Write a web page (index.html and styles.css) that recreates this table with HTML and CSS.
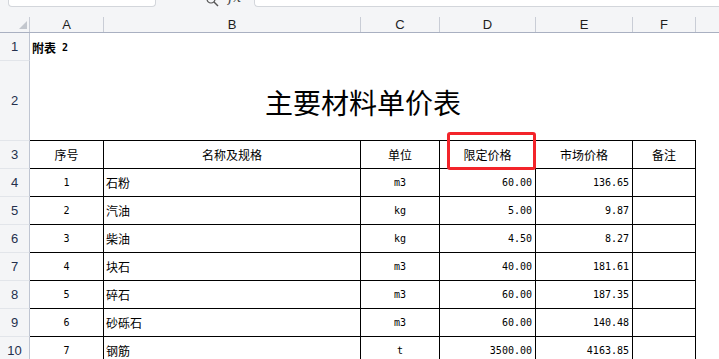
FILE: index.html
```html
<!DOCTYPE html>
<html>
<head>
<meta charset="utf-8">
<link rel="stylesheet" href="styles.css">
</head>
<body>
<div class="toolbar">
  <div class="namebox"><span class="nametext">A11</span></div>
  <div class="fxicon">
    <svg width="40" height="8" viewBox="0 0 40 8">
      <circle cx="5" cy="-1" r="4" fill="none" stroke="#555" stroke-width="1.2"/>
      <line x1="8" y1="2" x2="12" y2="6" stroke="#555" stroke-width="1.4"/>
    </svg>
    <span class="fxtext">fx</span>
  </div>
  <div class="formula"></div>
</div>

<div class="sheet">
  <div class="grid colhead">
    <div class="hc corner"><svg width="8" height="8" viewBox="0 0 8 8"><polygon points="8,0 8,8 0,8" fill="#c3c7ce"/></svg></div>
    <div class="hc">A</div>
    <div class="hc">B</div>
    <div class="hc">C</div>
    <div class="hc">D</div>
    <div class="hc">E</div>
    <div class="hc">F</div>
    <div class="hc last"></div>
  </div>

  <div class="grid row r1">
    <div class="rh">1</div>
    <div class="cell note"><b class="cjk">附表</b><b class="mono"> 2</b></div>
  </div>

  <div class="grid row r2">
    <div class="rh">2</div>
    <div class="cell title">主要材料单价表</div>
  </div>

  <div class="grid row">
    <div class="rh">3</div>
    <div class="cell t c cjk">序号</div>
    <div class="cell t c cjk">名称及规格</div>
    <div class="cell t c cjk">单位</div>
    <div class="cell t c cjk">限定价格</div>
    <div class="cell t c cjk">市场价格</div>
    <div class="cell t c cjk">备注</div>
  </div>

  <div class="grid row">
    <div class="rh">4</div>
    <div class="cell t c mono">1</div>
    <div class="cell t l cjk">石粉</div>
    <div class="cell t c mono">m3</div>
    <div class="cell t r mono">60.00</div>
    <div class="cell t r mono">136.65</div>
    <div class="cell t"></div>
  </div>

  <div class="grid row">
    <div class="rh">5</div>
    <div class="cell t c mono">2</div>
    <div class="cell t l cjk">汽油</div>
    <div class="cell t c mono">kg</div>
    <div class="cell t r mono">5.00</div>
    <div class="cell t r mono">9.87</div>
    <div class="cell t"></div>
  </div>

  <div class="grid row">
    <div class="rh">6</div>
    <div class="cell t c mono">3</div>
    <div class="cell t l cjk">柴油</div>
    <div class="cell t c mono">kg</div>
    <div class="cell t r mono">4.50</div>
    <div class="cell t r mono">8.27</div>
    <div class="cell t"></div>
  </div>

  <div class="grid row">
    <div class="rh">7</div>
    <div class="cell t c mono">4</div>
    <div class="cell t l cjk">块石</div>
    <div class="cell t c mono">m3</div>
    <div class="cell t r mono">40.00</div>
    <div class="cell t r mono">181.61</div>
    <div class="cell t"></div>
  </div>

  <div class="grid row">
    <div class="rh">8</div>
    <div class="cell t c mono">5</div>
    <div class="cell t l cjk">碎石</div>
    <div class="cell t c mono">m3</div>
    <div class="cell t r mono">60.00</div>
    <div class="cell t r mono">187.35</div>
    <div class="cell t"></div>
  </div>

  <div class="grid row">
    <div class="rh">9</div>
    <div class="cell t c mono">6</div>
    <div class="cell t l cjk">砂砾石</div>
    <div class="cell t c mono">m3</div>
    <div class="cell t r mono">60.00</div>
    <div class="cell t r mono">140.48</div>
    <div class="cell t"></div>
  </div>

  <div class="grid row">
    <div class="rh">10</div>
    <div class="cell t c mono">7</div>
    <div class="cell t l cjk">钢筋</div>
    <div class="cell t c mono">t</div>
    <div class="cell t r mono">3500.00</div>
    <div class="cell t r mono">4163.85</div>
    <div class="cell t"></div>
  </div>

  <div class="highlight"></div>
</div>
</body>
</html>
```

FILE: styles.css
```css
html, body {
  margin: 0;
  padding: 0;
  background: #ffffff;
  width: 719px;
  height: 359px;
  overflow: hidden;
}

body {
  font-family: "Liberation Sans", Arial, sans-serif;
  color: #000;
}

.toolbar {
  height: 8px;
  background: #f4f5f7;
  display: flex;
  align-items: flex-start;
}

.namebox {
  margin-left: 8px;
  width: 148px;
  height: 7px;
  box-sizing: border-box;
  background: #fff;
  border: 1px solid #d3d6db;
  border-top: none;
  border-radius: 0 0 4px 4px;
  overflow: hidden;
  display: flex;
  justify-content: center;
}

.nametext {
  font-size: 13px;
  line-height: 14px;
  margin-top: -11px;
  margin-right: 12px;
  color: #333;
}

.fxicon {
  margin-left: 50px;
  width: 48px;
  height: 8px;
  overflow: hidden;
  display: flex;
  align-items: flex-start;
}

.fxtext {
  font-family: "DejaVu Serif", serif;
  font-style: italic;
  font-size: 14px;
  line-height: 14px;
  margin-top: -10px;
  margin-left: -18px;
  color: #444;
}

.formula {
  flex: 1;
  height: 7px;
  box-sizing: border-box;
  background: #fff;
  border-left: 1px solid #d3d6db;
  border-bottom: 1px solid #d3d6db;
  border-radius: 0 0 0 4px;
}

.sheet {
  position: relative;
}

.grid {
  display: grid;
  grid-template-columns: 30px 74px 257px 79px 96px 97px 63px 1fr;
}

.colhead {
  height: 25px;
  box-sizing: border-box;
  background: #f4f5f7;
  border-bottom: 1px solid #a9b0c1;
}

.hc {
  margin-top: 9px;
  height: 15px;
  box-sizing: border-box;
  border-right: 1px solid #c9cdd6;
  display: flex;
  align-items: center;
  justify-content: center;
  font-size: 13px;
  color: #1e1e1e;
}

.hc.last {
  border-right: none;
}

.hc.corner {
  justify-content: flex-end;
  align-items: flex-end;
  padding-right: 2px;
  padding-bottom: 3px;
}

.hc.corner svg {
  display: block;
}

.row {
  height: 28px;
}

.row.r2 {
  height: 80px;
}

.rh {
  background: #f4f5f7;
  box-sizing: border-box;
  border-right: 1px solid #bfc5d2;
  border-bottom: 1px solid #e2e5ea;
  display: flex;
  align-items: center;
  justify-content: center;
  font-size: 13px;
  color: #24304d;
}

.cell {
  box-sizing: border-box;
  display: flex;
  align-items: center;
  white-space: nowrap;
  font-size: 12px;
}

.cell.t {
  border-right: 1px solid #000;
  border-bottom: 1px solid #000;
}

.cell.c { justify-content: center; }
.cell.l { justify-content: flex-start; padding-left: 2px; }
.cell.r { justify-content: flex-end; padding-right: 3px; }

.cjk {
  font-family: "Noto Sans CJK SC", "Noto Sans", sans-serif;
  font-size: 12px;
}

.mono {
  font-family: "DejaVu Sans Mono", "Liberation Mono", monospace;
  font-size: 10px;
}

.note {
  padding-left: 2px;
  overflow: visible;
}

.note .mono {
  white-space: pre;
  font-size: 10px;
}

.title {
  grid-column: 2 / 8;
  border-bottom: 1px solid #000;
  justify-content: center;
  font-family: "Noto Sans CJK SC", sans-serif;
  font-size: 28px;
  padding-top: 2px;
}

.highlight {
  position: absolute;
  left: 447px;
  top: 124px;
  width: 89px;
  height: 38px;
  box-sizing: border-box;
  border: 3px solid #f3242a;
  border-radius: 3px;
}
```
